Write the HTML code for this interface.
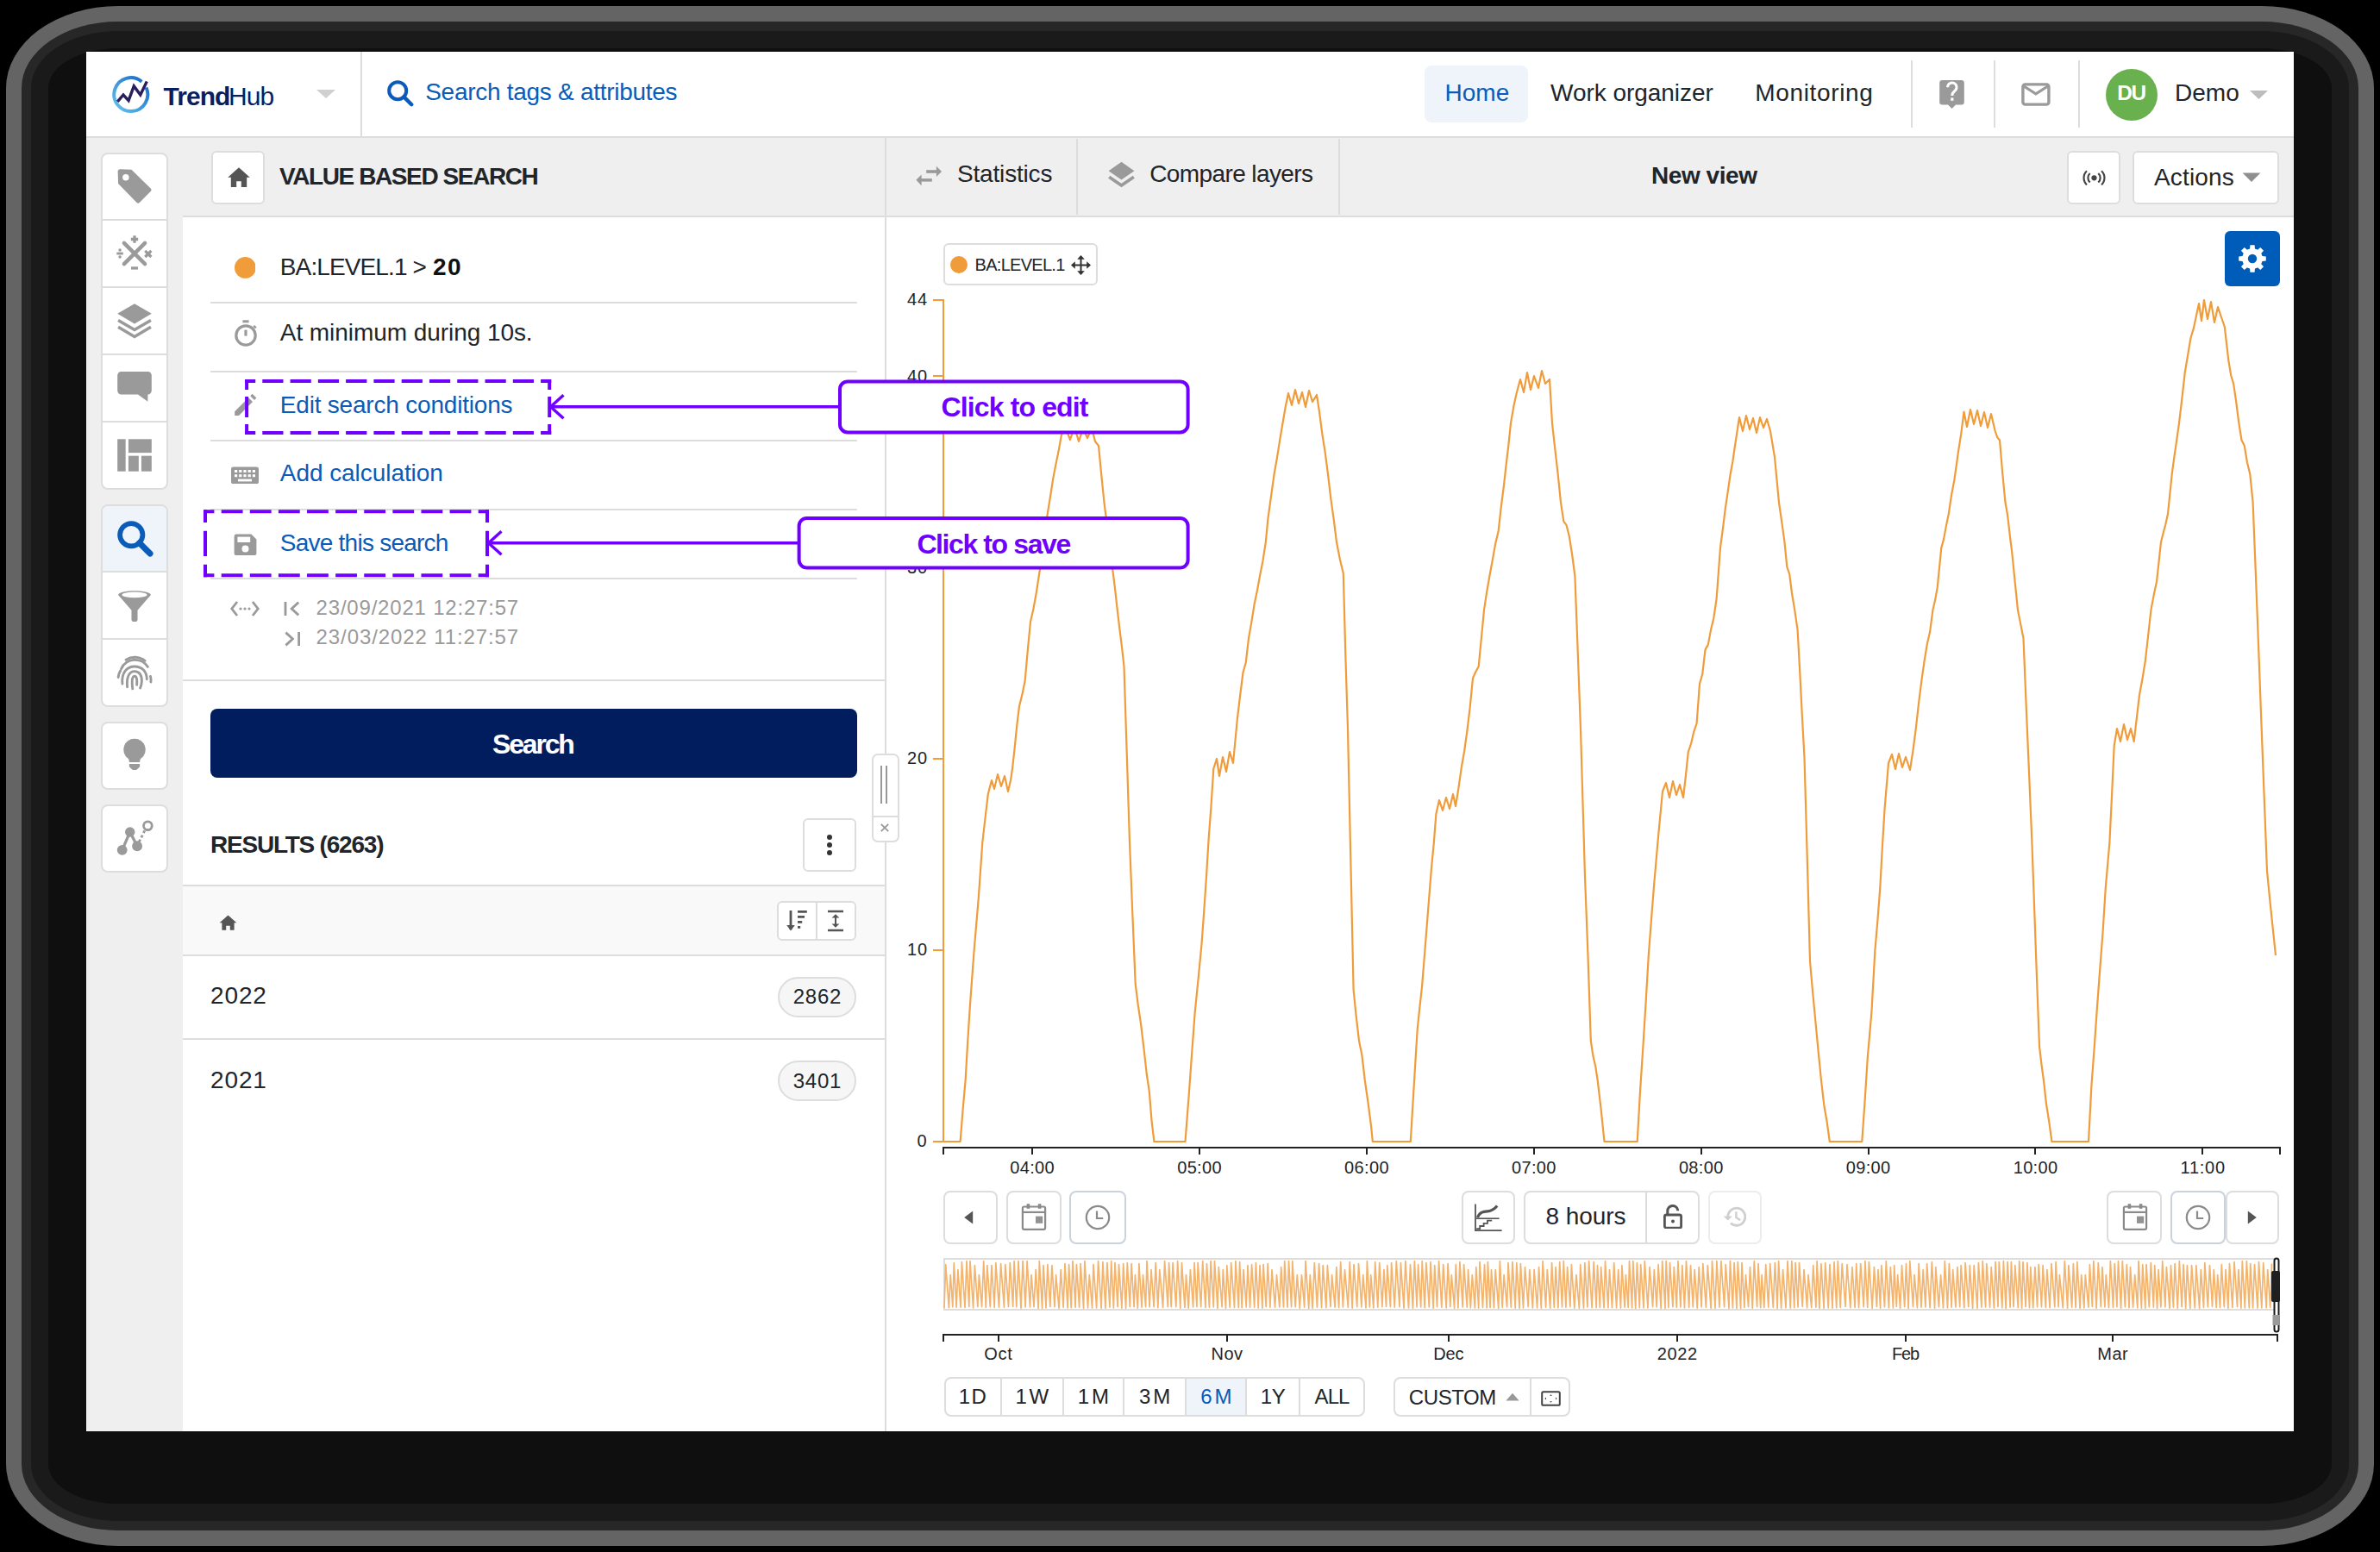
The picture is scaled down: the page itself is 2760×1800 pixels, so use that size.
<!DOCTYPE html>
<html><head><meta charset="utf-8"><title>TrendHub</title>
<style>
html,body{margin:0;padding:0}
body{width:2760px;height:1800px;background:#000;overflow:hidden;position:relative;font-family:"Liberation Sans",sans-serif}
.t{position:absolute;white-space:nowrap;font-family:"Liberation Sans",sans-serif}
.r{position:absolute;display:block}
.halo1{position:absolute;left:7px;top:7px;width:2746px;height:1786px;border-radius:130px/95px;background:#646464}
.halo2{position:absolute;left:25px;top:25px;width:2710px;height:1750px;border-radius:112px/77px;background:#272727}
.halo3{position:absolute;left:36px;top:36px;width:2688px;height:1728px;border-radius:101px/66px;background:#1a1a1a}
.halo4{position:absolute;left:56px;top:56px;width:2648px;height:1688px;border-radius:81px/46px;background:#0f0f0f}
.app{position:absolute;left:100px;top:60px;width:2560px;height:1600px;overflow:hidden;background:#fff}
.z{position:absolute;left:0;top:0;width:1280px;height:800px;zoom:2}
</style></head><body>
<div class="halo1"></div><div class="halo2"></div><div class="halo3"></div><div class="halo4"></div>
<div class="app"><div class="z">
<div class="r" style="left:0px;top:0px;width:1280px;height:49px;background:#fff"></div>
<div class="r" style="left:0px;top:49px;width:1280px;height:1px;background:#dddddd"></div>
<svg class="r" style="left:14px;top:13px;" width="24" height="24" viewBox="0 0 24 24"><defs><linearGradient id="lg" x1="0" y1="1" x2="1" y2="0"><stop offset="0" stop-color="#62c6ef"/><stop offset="1" stop-color="#1466c6"/></linearGradient></defs><path d="M20.76 7.74 A9.75 9.75 0 1 1 18.17 4.33" fill="none" stroke="url(#lg)" stroke-width="2"/><polyline points="4.15,15.95 7.5,12 10.55,15.3 13.65,6.95 17.4,12 21.15,4.3" fill="none" stroke="#2a1f5e" stroke-width="1.7" stroke-linejoin="miter"/></svg>
<div class="t" style="left:44.7px;top:18.25px;font-size:15px;line-height:15px;letter-spacing:-0.46px;color:#0b1f5e;font-weight:700;">Trend</div>
<div class="t" style="left:82.5px;top:18.25px;font-size:15px;line-height:15px;letter-spacing:-0.46px;color:#0b1f5e;">Hub</div>
<svg class="r" style="left:133px;top:21.5px;" width="12" height="6" viewBox="0 0 12 6"><path d="M0.5 0.5 L11.5 0.5 L6 5.5 Z" fill="#d0d0d0"/></svg>
<div class="r" style="left:159px;top:0px;width:1px;height:49px;background:#dddddd"></div>
<svg class="r" style="left:174px;top:16px;" width="16" height="16" viewBox="0 0 16 16"><circle cx="6.6" cy="6.6" r="5" fill="none" stroke="#0a5cb8" stroke-width="2"/><path d="M10.2 10.2 L14.6 14.6" stroke="#0a5cb8" stroke-width="2.2" stroke-linecap="round"/></svg>
<div class="t" style="left:196.6px;top:16.59px;font-size:14px;line-height:14px;letter-spacing:-0.14px;color:#0a5cb8;">Search tags &amp; attributes</div>
<div class="r" style="left:776px;top:8px;width:60px;height:33px;background:#eef4fa;border-radius:4px"></div>
<div class="t" style="left:787.8px;top:17.14px;font-size:14px;line-height:14px;letter-spacing:-0.01px;color:#0a5cb8;">Home</div>
<div class="t" style="left:849px;top:17.14px;font-size:14px;line-height:14px;letter-spacing:-0.02px;color:#212529;">Work organizer</div>
<div class="t" style="left:967.6px;top:17.14px;font-size:14px;line-height:14px;letter-spacing:0.33px;color:#212529;">Monitoring</div>
<div class="r" style="left:1058px;top:5px;width:1px;height:39px;background:#dddddd"></div>
<div class="r" style="left:1106px;top:5px;width:1px;height:39px;background:#dddddd"></div>
<div class="r" style="left:1155.1px;top:5px;width:1px;height:39px;background:#dddddd"></div>
<svg class="r" style="left:1074px;top:16px;" width="17" height="19" viewBox="0 0 17 19"><path d="M2.2 0.5 H13.3 A1.6 1.6 0 0 1 14.9 2.1 V13.1 A1.6 1.6 0 0 1 13.3 14.7 H10 L7.75 17 L5.5 14.7 H2.2 A1.6 1.6 0 0 1 0.6 13.1 V2.1 A1.6 1.6 0 0 1 2.2 0.5 Z" fill="#9a9a9a"/><path d="M5.3 4.6 A2.6 2.6 0 1 1 9.4 6.7 C8.3 7.5 7.9 8.1 7.9 9.5" fill="none" stroke="#fff" stroke-width="1.5"/><rect x="7.1" y="10.7" width="1.6" height="1.7" fill="#fff"/></svg>
<svg class="r" style="left:1122px;top:18px;" width="18" height="14" viewBox="0 0 18 14"><rect x="0.95" y="0.95" width="15" height="11.6" rx="1.3" fill="none" stroke="#9a9a9a" stroke-width="1.7"/><path d="M1.5 2 L8.45 6.4 L15.4 2" fill="none" stroke="#9a9a9a" stroke-width="1.6"/></svg>
<svg class="r" style="left:1171px;top:10px;" width="30" height="30" viewBox="0 0 30 30"><circle cx="15" cy="15" r="15" fill="#69b04f"/></svg>
<div class="t" style="left:1177.65px;top:18.08px;font-size:12.2px;line-height:12.2px;letter-spacing:-0.73px;color:#fff;font-weight:700;">DU</div>
<div class="t" style="left:1211px;top:17.14px;font-size:14px;line-height:14px;letter-spacing:0.02px;color:#212529;">Demo</div>
<svg class="r" style="left:1254px;top:22px;" width="12" height="6" viewBox="0 0 12 6"><path d="M0.5 0.5 L11 0.5 L5.75 5.5 Z" fill="#bdbdbd"/></svg>
<div class="r" style="left:0px;top:50px;width:1280px;height:45.5px;background:#efefef"></div>
<div class="r" style="left:0px;top:95.5px;width:56px;height:704.5px;background:#efefef"></div>
<div class="r" style="left:56px;top:95px;width:1224px;height:1px;background:#dddddd"></div>
<div class="r" style="left:463px;top:50px;width:1px;height:750px;background:#dddddd"></div>
<div class="r" style="left:72.5px;top:57.5px;width:31px;height:31px;background:#fff;border:1px solid #dddddd;border-radius:3px;box-sizing:border-box"></div>
<svg class="r" style="left:81.5px;top:66.5px;" width="14" height="13" viewBox="0 0 14 13"><path d="M0.6 6.4 L7 0.6 L13.4 6.4 L11.6 6.4 L11.6 12 L8.4 12 L8.4 8.6 L5.6 8.6 L5.6 12 L2.4 12 L2.4 6.4 Z" fill="#555"/></svg>
<div class="t" style="left:112px;top:65.34px;font-size:14px;line-height:14px;letter-spacing:-0.7px;color:#212529;font-weight:700;">VALUE BASED SEARCH</div>
<div class="r" style="left:574px;top:50.5px;width:1px;height:44px;background:#dddddd"></div>
<div class="r" style="left:726px;top:50.5px;width:1px;height:44px;background:#dddddd"></div>
<svg class="r" style="left:480.5px;top:65.5px;" width="16" height="13" viewBox="0 0 32 26"><rect x="13.2" y="6.2" width="12" height="3.6" fill="#9a9a9a"/><path d="M24.9 1.7 L31 7.95 L24.9 14.1 Z" fill="#9a9a9a"/><rect x="7" y="16.1" width="12.8" height="3.5" fill="#9a9a9a"/><path d="M7.6 11.5 L1.4 17.8 L7.6 24.2 Z" fill="#9a9a9a"/></svg>
<div class="t" style="left:505px;top:63.84px;font-size:14px;line-height:14px;letter-spacing:-0.09px;color:#212529;">Statistics</div>
<svg class="r" style="left:592.5px;top:63.5px;" width="15.5" height="16" viewBox="0 0 15.5 16"><path d="M7.75 0.4 L15.2 5.6 L7.75 10.8 L0.3 5.6 Z" fill="#9a9a9a"/><path d="M0.6 9.1 L7.75 14 L14.9 9.1" fill="none" stroke="#9a9a9a" stroke-width="1.8"/></svg>
<div class="t" style="left:616.6px;top:63.84px;font-size:14px;line-height:14px;letter-spacing:-0.3px;color:#212529;">Compare layers</div>
<div class="t" style="left:907.5px;top:64.84px;font-size:14px;line-height:14px;letter-spacing:-0.22px;color:#212529;font-weight:700;">New view</div>
<div class="r" style="left:1148.5px;top:57.5px;width:31px;height:31px;background:#fff;border:1px solid #dddddd;border-radius:3px;box-sizing:border-box"></div>
<svg class="r" style="left:1157.5px;top:68.3px;" width="13.5" height="9.3" viewBox="0 0 17 12"><circle cx="8.5" cy="6" r="2" fill="#444"/><path d="M5.4 2.6 A4.6 4.6 0 0 0 5.4 9.4 M11.6 2.6 A4.6 4.6 0 0 1 11.6 9.4 M3 0.8 A7.2 7.2 0 0 0 3 11.2 M14 0.8 A7.2 7.2 0 0 1 14 11.2" fill="none" stroke="#444" stroke-width="1.4"/></svg>
<div class="r" style="left:1186.5px;top:57.5px;width:85px;height:31px;background:#fff;border:1px solid #dddddd;border-radius:3px;box-sizing:border-box"></div>
<div class="t" style="left:1199px;top:66.14px;font-size:14px;line-height:14px;letter-spacing:0.08px;color:#212529;">Actions</div>
<svg class="r" style="left:1250px;top:70px;" width="11" height="6" viewBox="0 0 11 6"><path d="M0.3 0.3 L10.7 0.3 L5.5 5.5 Z" fill="#8f8f8f"/></svg>
<div class="r" style="left:8.5px;top:58.5px;width:39px;height:195.5px;background:#fff;border:1px solid #dddddd;border-radius:4px;box-sizing:border-box;overflow:hidden"></div>
<div class="r" style="left:9px;top:97px;width:38px;height:1px;background:#dddddd"></div>
<div class="r" style="left:9px;top:136px;width:38px;height:1px;background:#dddddd"></div>
<div class="r" style="left:9px;top:175px;width:38px;height:1px;background:#dddddd"></div>
<div class="r" style="left:9px;top:214px;width:38px;height:1px;background:#dddddd"></div>
<div class="r" style="left:8.5px;top:262.5px;width:39px;height:117.5px;background:#fff;border:1px solid #dddddd;border-radius:4px;box-sizing:border-box;overflow:hidden"></div>
<div class="r" style="left:9.5px;top:263.5px;width:37px;height:38px;background:#eef4fa;border-radius:3px 3px 0 0"></div>
<div class="r" style="left:9px;top:301px;width:38px;height:1px;background:#dddddd"></div>
<div class="r" style="left:9px;top:340px;width:38px;height:1px;background:#dddddd"></div>
<div class="r" style="left:8.5px;top:388.5px;width:39px;height:39.5px;background:#fff;border:1px solid #dddddd;border-radius:4px;box-sizing:border-box;overflow:hidden"></div>
<div class="r" style="left:8.5px;top:436.5px;width:39px;height:39.5px;background:#fff;border:1px solid #dddddd;border-radius:4px;box-sizing:border-box;overflow:hidden"></div>
<svg class="r" style="left:17px;top:67px;" width="22" height="22" viewBox="0 0 20 20"><path d="M1.2 2.4 A1.3 1.3 0 0 1 2.5 1 L8.4 1.2 L18.6 11.2 A1 1 0 0 1 18.6 12.6 L12.6 18.6 A1 1 0 0 1 11.2 18.6 L1.4 8.6 Z" fill="#9a9a9a"/><circle cx="5.4" cy="5.3" r="1.7" fill="#fff"/></svg>
<svg class="r" style="left:17px;top:106px;" width="22" height="22" viewBox="0 0 20 20"><path d="M4.5 4.5 L15.5 15.5 M15.5 4.5 L4.5 15.5" stroke="#9a9a9a" stroke-width="2" stroke-linecap="round"/><path d="M10 0.6 V4.4 M8.1 2.5 H11.9" stroke="#9a9a9a" stroke-width="1.5"/><path d="M8.2 17.7 H11.8" stroke="#9a9a9a" stroke-width="1.5"/><path d="M0.6 10 H4" stroke="#9a9a9a" stroke-width="1.3"/><circle cx="2.3" cy="8.2" r="0.8" fill="#9a9a9a"/><circle cx="2.3" cy="11.8" r="0.8" fill="#9a9a9a"/><path d="M15.6 8.6 L18.8 11.8 M18.8 8.6 L15.6 11.8" stroke="#9a9a9a" stroke-width="1.5"/></svg>
<svg class="r" style="left:17px;top:145px;" width="22" height="22" viewBox="0 0 20 20"><path d="M10 1 L19 6.3 L10 11.6 L1 6.3 Z" fill="#9a9a9a"/><path d="M1.4 9.8 L10 14.8 L18.6 9.8" fill="none" stroke="#9a9a9a" stroke-width="1.6"/><path d="M1.4 13.3 L10 18.4 L18.6 13.3" fill="none" stroke="#9a9a9a" stroke-width="1.6"/></svg>
<svg class="r" style="left:17px;top:184px;" width="22" height="22" viewBox="0 0 20 20"><path d="M3 1.4 H17 A2 2 0 0 1 19 3.4 V11.4 A2 2 0 0 1 17 13.4 V17.2 L11.8 13.4 H3 A2 2 0 0 1 1 11.4 V3.4 A2 2 0 0 1 3 1.4 Z" fill="#9a9a9a"/></svg>
<svg class="r" style="left:17px;top:223px;" width="22" height="22" viewBox="0 0 20 20"><rect x="1" y="1.5" width="4.3" height="17" fill="#9a9a9a"/><rect x="6.8" y="1.5" width="12.2" height="7.2" fill="#9a9a9a"/><rect x="6.8" y="10.3" width="5.4" height="8.2" fill="#9a9a9a"/><rect x="13.6" y="10.3" width="5.4" height="8.2" fill="#9a9a9a"/></svg>
<svg class="r" style="left:17px;top:271px;" width="22" height="22" viewBox="0 0 20 20"><circle cx="8.3" cy="8.3" r="6" fill="none" stroke="#0a5cb8" stroke-width="2.6"/><path d="M12.6 12.6 L18.2 18.2" stroke="#0a5cb8" stroke-width="3.2" stroke-linecap="round"/></svg>
<svg class="r" style="left:17px;top:310px;" width="22" height="22" viewBox="0 0 20 20"><path d="M1.4 4.6 C1.4 1.6 18.6 1.6 18.6 4.6 L11.6 12.6 V17.6 A1 1 0 0 1 10.6 18.6 H9.4 A1 1 0 0 1 8.4 17.6 V12.6 Z" fill="#9a9a9a"/><ellipse cx="10" cy="4.5" rx="6.6" ry="1.5" fill="#fff"/></svg>
<svg class="r" style="left:17px;top:349px;" width="22" height="22" viewBox="0 0 20 20"><g fill="none" stroke="#9a9a9a" stroke-width="1.3" stroke-linecap="round"><path d="M3 8 A8 8 0 0 1 17 7"/><path d="M5.5 3.3 A8.5 8.5 0 0 1 15.5 3.8"/><path d="M1.4 12.5 A8.6 8.6 0 0 1 2.6 9"/><path d="M3.6 16 C3 10 6 6.8 10 6.8 C14 6.8 16.5 9.5 16.5 13.5"/><path d="M6.2 17.6 C5.6 12.5 7.2 9.4 10 9.4 C12.6 9.4 14 11.4 13.8 14.8 C13.7 16 13.4 17.2 13 18.2"/><path d="M9 18.6 C8.6 16 8.4 12 10 11.9 C11.5 11.9 11.3 15 11.2 16.5"/><path d="M18.4 12 A8 8 0 0 1 18.6 15"/></g></svg>
<svg class="r" style="left:17px;top:397px;" width="22" height="22" viewBox="0 0 20 20"><path d="M10 1.3 A5.7 5.7 0 0 1 13.6 11.5 C12.9 12.1 12.8 12.8 12.8 13.6 H7.2 C7.2 12.8 7.1 12.1 6.4 11.5 A5.7 5.7 0 0 1 10 1.3 Z" fill="#9a9a9a"/><path d="M7.2 14.6 H12.8 V16 L11 17.7 H9 L7.2 16 Z" fill="#9a9a9a"/></svg>
<svg class="r" style="left:17px;top:445px;" width="22" height="22" viewBox="0 0 20 20"><circle cx="3.5" cy="16.3" r="2.7" fill="#9a9a9a"/><circle cx="7.6" cy="6.8" r="2.6" fill="#9a9a9a"/><circle cx="11.4" cy="14.2" r="2.7" fill="#9a9a9a"/><path d="M3.5 16.3 L7.6 6.8 L11.4 14.2" fill="none" stroke="#9a9a9a" stroke-width="1.5"/><circle cx="17" cy="3.5" r="2.2" fill="none" stroke="#9a9a9a" stroke-width="1.3"/><path d="M12.4 12 L15.6 5.6" stroke="#9a9a9a" stroke-width="1.3" stroke-dasharray="1.4 1.2"/></svg>
<div class="r" style="left:56px;top:96px;width:407px;height:704px;background:#fff"></div>
<div class="r" style="left:72px;top:145px;width:375px;height:1px;background:#dddddd"></div>
<div class="r" style="left:72px;top:185px;width:375px;height:1px;background:#dddddd"></div>
<div class="r" style="left:72px;top:225px;width:375px;height:1px;background:#dddddd"></div>
<div class="r" style="left:72px;top:265px;width:375px;height:1px;background:#dddddd"></div>
<div class="r" style="left:72px;top:305px;width:375px;height:1px;background:#dddddd"></div>
<svg class="r" style="left:85.8px;top:119px;" width="12.4" height="12.4" viewBox="0 0 12.4 12.4"><circle cx="6.2" cy="6.2" r="6.2" fill="#f09c3a"/></svg>
<div class="t" style="left:112.4px;top:118.24px;font-size:14px;line-height:14px;letter-spacing:-0.44px;color:#212529;">BA:LEVEL.1 &gt;</div>
<div class="t" style="left:201.03px;top:118.24px;font-size:14px;line-height:14px;letter-spacing:0.68px;color:#111;font-weight:700;">20</div>
<svg class="r" style="left:85.5px;top:155.3px;" width="14" height="15.5" viewBox="0 0 14 15.5"><circle cx="7" cy="9" r="5.6" fill="none" stroke="#9a9a9a" stroke-width="1.6"/><path d="M5.2 0.9 H8.8" stroke="#9a9a9a" stroke-width="1.5"/><path d="M7 5.8 V9.3" stroke="#9a9a9a" stroke-width="1.6"/><path d="M11.6 3.4 L12.9 4.7" stroke="#9a9a9a" stroke-width="1.3"/></svg>
<div class="t" style="left:112.4px;top:156.04px;font-size:14px;line-height:14px;letter-spacing:-0.03px;color:#212529;">At minimum during 10s.</div>
<svg class="r" style="left:85.5px;top:198px;" width="13.5" height="13.5" viewBox="0 0 13.5 13.5"><path d="M0.6 13 V10.6 L8.6 2.6 L11 5 L3 13 Z" fill="#9a9a9a"/><path d="M9.6 1.6 L10.8 0.4 L13.2 2.8 L12 4 Z" fill="#9a9a9a"/></svg>
<div class="t" style="left:112.4px;top:197.84px;font-size:14px;line-height:14px;letter-spacing:-0.1px;color:#0a5cb8;">Edit search conditions</div>
<svg class="r" style="left:84px;top:240.5px;" width="16" height="10.2" viewBox="0 0 16 10.2"><rect x="0" y="0.2" width="16" height="10" rx="1.3" fill="#9a9a9a"/><g fill="#fff"><rect x="2" y="2" width="1.6" height="1.5"/><rect x="4.6" y="2" width="1.6" height="1.5"/><rect x="7.2" y="2" width="1.6" height="1.5"/><rect x="9.8" y="2" width="1.6" height="1.5"/><rect x="12.4" y="2" width="1.6" height="1.5"/><rect x="2" y="4.6" width="1.6" height="1.5"/><rect x="4.6" y="4.6" width="1.6" height="1.5"/><rect x="7.2" y="4.6" width="1.6" height="1.5"/><rect x="9.8" y="4.6" width="1.6" height="1.5"/><rect x="12.4" y="4.6" width="1.6" height="1.5"/><rect x="4" y="7.3" width="8" height="1.4"/></g></svg>
<div class="t" style="left:112.4px;top:237.64px;font-size:14px;line-height:14px;letter-spacing:-0.03px;color:#0a5cb8;">Add calculation</div>
<svg class="r" style="left:85.5px;top:279.3px;" width="13.5" height="12.8" viewBox="0 0 13.5 12.8"><path d="M1.4 0.3 H10.2 L13.2 3.3 V11.2 A1.3 1.3 0 0 1 11.9 12.5 H1.6 A1.3 1.3 0 0 1 0.3 11.2 V1.6 A1.3 1.3 0 0 1 1.4 0.3 Z" fill="#9a9a9a"/><rect x="2.2" y="1.8" width="7.4" height="3.2" fill="#fff"/><circle cx="6.75" cy="8.8" r="2" fill="#fff"/></svg>
<div class="t" style="left:112.4px;top:278.04px;font-size:14px;line-height:14px;letter-spacing:-0.38px;color:#0a5cb8;">Save this search</div>
<svg class="r" style="left:83.5px;top:318px;" width="17" height="10" viewBox="0 0 17 10"><path d="M4 1 L0.9 5 L4 9 M13 1 L16.1 5 L13 9" fill="none" stroke="#9a9a9a" stroke-width="1.4"/><g fill="#9a9a9a"><circle cx="6" cy="5" r="0.8"/><circle cx="8.5" cy="5" r="0.8"/><circle cx="11" cy="5" r="0.8"/></g></svg>
<svg class="r" style="left:114.5px;top:318.5px;" width="10" height="9" viewBox="0 0 10 9"><path d="M1 0.5 V8.5" stroke="#9a9a9a" stroke-width="1.4"/><path d="M8.6 0.8 L4.6 4.5 L8.6 8.2" fill="none" stroke="#9a9a9a" stroke-width="1.4"/></svg>
<div class="t" style="left:133.3px;top:316.64px;font-size:12px;line-height:12px;letter-spacing:0.4px;color:#9a9a9a;">23/09/2021 12:27:57</div>
<svg class="r" style="left:114.5px;top:336px;" width="10" height="9" viewBox="0 0 10 9"><path d="M8.8 0.5 V8.5" stroke="#9a9a9a" stroke-width="1.4"/><path d="M1.2 0.8 L5.2 4.5 L1.2 8.2" fill="none" stroke="#9a9a9a" stroke-width="1.4"/></svg>
<div class="t" style="left:133.3px;top:333.74px;font-size:12px;line-height:12px;letter-spacing:0.45px;color:#9a9a9a;">23/03/2022 11:27:57</div>
<div class="r" style="left:56px;top:364px;width:407px;height:1px;background:#dddddd"></div>
<div class="r" style="left:72px;top:381px;width:375px;height:40px;background:#021d5e;border-radius:4px"></div>
<div class="t" style="left:235.55px;top:393.55px;font-size:16px;line-height:16px;letter-spacing:-1.1px;color:#fff;font-weight:700;">Search</div>
<div class="t" style="left:72px;top:453.04px;font-size:14px;line-height:14px;letter-spacing:-0.61px;color:#212529;font-weight:700;">RESULTS (6263)</div>
<div class="r" style="left:415.5px;top:444.5px;width:31px;height:31px;background:#fff;border:1px solid #dddddd;border-radius:3px;box-sizing:border-box"></div>
<svg class="r" style="left:429px;top:453px;" width="4" height="14" viewBox="0 0 4 14"><circle cx="2" cy="2.5" r="1.5" fill="#333"/><circle cx="2" cy="7" r="1.5" fill="#333"/><circle cx="2" cy="11.5" r="1.5" fill="#333"/></svg>
<div class="r" style="left:56px;top:483px;width:407px;height:41.5px;background:#f9f9f9;border-top:1px solid #dddddd;border-bottom:1px solid #dddddd;box-sizing:border-box"></div>
<svg class="r" style="left:76.8px;top:500.4px;" width="10.5" height="9.2" viewBox="0 0 10.5 9.2"><path d="M0.3 4.6 L5.25 0.3 L10.2 4.6 H8.8 V8.9 H6.4 V6.4 H4.1 V8.9 H1.7 V4.6 Z" fill="#555"/></svg>
<div class="r" style="left:400.5px;top:492.5px;width:46px;height:23px;background:#fff;border:1px solid #dddddd;border-radius:3px;box-sizing:border-box"></div>
<div class="r" style="left:423px;top:493.5px;width:1px;height:21px;background:#dddddd"></div>
<svg class="r" style="left:405.5px;top:497.5px;" width="13" height="13" viewBox="0 0 13 13"><path d="M3 0.5 V11.5" stroke="#555" stroke-width="1.4"/><path d="M0.6 9 L3 12.2 L5.4 9 Z" fill="#555"/><path d="M7 1.2 H12.4 M7 4.2 H11 M7 7.2 H9.6 M7 10.2 H8.6" stroke="#555" stroke-width="1.3"/></svg>
<svg class="r" style="left:428.5px;top:497.5px;" width="12" height="13" viewBox="0 0 12 13"><path d="M1.5 1 H10.5 M1.5 12 H10.5" stroke="#555" stroke-width="1.2"/><path d="M6 3 V10" stroke="#555" stroke-width="1"/><path d="M3.8 4.8 L6 2.6 L8.2 4.8 Z M3.8 8.2 L6 10.4 L8.2 8.2 Z" fill="#555"/></svg>
<div class="t" style="left:72px;top:540.44px;font-size:14px;line-height:14px;letter-spacing:0.44px;color:#212529;">2022</div>
<div class="r" style="left:401px;top:536.3px;width:45.5px;height:23.5px;background:#f6f6f6;border:1px solid #dddddd;border-radius:12px;box-sizing:border-box"></div>
<div class="t" style="left:409.88px;top:542.04px;font-size:12px;line-height:12px;letter-spacing:0.38px;color:#212529;">2862</div>
<div class="r" style="left:56px;top:572px;width:407px;height:1px;background:#dddddd"></div>
<div class="t" style="left:72px;top:589.64px;font-size:14px;line-height:14px;letter-spacing:0.44px;color:#212529;">2021</div>
<div class="r" style="left:401px;top:585px;width:45.5px;height:23.5px;background:#f6f6f6;border:1px solid #dddddd;border-radius:12px;box-sizing:border-box"></div>
<div class="t" style="left:409.88px;top:591.04px;font-size:12px;line-height:12px;letter-spacing:0.38px;color:#212529;">3401</div>
<div class="r" style="left:464px;top:96px;width:816px;height:704px;background:#fff"></div>
<div class="r" style="left:1240px;top:104px;width:32px;height:32px;background:#005cb9;border-radius:3px"></div>
<svg class="r" style="left:1248px;top:112px;" width="16" height="16" viewBox="0 0 16 16"><path d="M13.72 6.55 L15.89 6.69 L15.89 9.31 L13.72 9.45 L13.07 11.02 L14.51 12.65 L12.65 14.51 L11.02 13.07 L9.45 13.72 L9.31 15.89 L6.69 15.89 L6.55 13.72 L4.98 13.07 L3.35 14.51 L1.49 12.65 L2.93 11.02 L2.28 9.45 L0.11 9.31 L0.11 6.69 L2.28 6.55 L2.93 4.98 L1.49 3.35 L3.35 1.49 L4.98 2.93 L6.55 2.28 L6.69 0.11 L9.31 0.11 L9.45 2.28 L11.02 2.93 L12.65 1.49 L14.51 3.35 L13.07 4.98 Z" fill="#fff"/><circle cx="8" cy="8" r="5.8" fill="#fff"/><circle cx="8" cy="8" r="2.6" fill="#005cb9"/></svg>
<div class="r" style="left:497px;top:111px;width:89.5px;height:24.5px;background:#fff;border:1px solid #dddddd;border-radius:3px;box-sizing:border-box"></div>
<svg class="r" style="left:501px;top:118.4px;" width="10" height="10" viewBox="0 0 10 10"><circle cx="5" cy="5" r="5" fill="#f09c3a"/></svg>
<div class="t" style="left:515.3px;top:118.68px;font-size:10px;line-height:10px;letter-spacing:-0.36px;color:#212529;">BA:LEVEL.1</div>
<svg class="r" style="left:571px;top:118px;" width="11.5" height="11.5" viewBox="0 0 11.5 11.5"><path d="M5.75 0.8 V10.7 M0.8 5.75 H10.7" stroke="#333" stroke-width="1"/><path d="M5.75 0 L3.6 2.4 H7.9 Z M5.75 11.5 L3.6 9.1 H7.9 Z M0 5.75 L2.4 3.6 V7.9 Z M11.5 5.75 L9.1 3.6 V7.9 Z" fill="#333"/></svg>
<div class="r" style="left:496.5px;top:143.3px;width:1px;height:489px;background:#f09c3a"></div>
<div class="r" style="left:491px;top:631.3px;width:6px;height:1px;background:#f09c3a"></div>
<div class="t" style="left:481.8px;top:626.53px;font-size:10px;line-height:10px;letter-spacing:0.25px;color:#212529;">0</div>
<div class="r" style="left:491px;top:520.39px;width:6px;height:1px;background:#f09c3a"></div>
<div class="t" style="left:476px;top:515.62px;font-size:10px;line-height:10px;letter-spacing:0.47px;color:#212529;">10</div>
<div class="r" style="left:491px;top:409.48px;width:6px;height:1px;background:#f09c3a"></div>
<div class="t" style="left:476px;top:404.71px;font-size:10px;line-height:10px;letter-spacing:0.47px;color:#212529;">20</div>
<div class="r" style="left:491px;top:298.57px;width:6px;height:1px;background:#f09c3a"></div>
<div class="t" style="left:476px;top:293.8px;font-size:10px;line-height:10px;letter-spacing:0.47px;color:#212529;">30</div>
<div class="r" style="left:491px;top:187.66px;width:6px;height:1px;background:#f09c3a"></div>
<div class="t" style="left:476px;top:182.89px;font-size:10px;line-height:10px;letter-spacing:0.47px;color:#212529;">40</div>
<div class="r" style="left:491px;top:143.3px;width:6px;height:1px;background:#f09c3a"></div>
<div class="t" style="left:476px;top:138.53px;font-size:10px;line-height:10px;letter-spacing:0.47px;color:#212529;">44</div>
<div class="r" style="left:497px;top:635.2px;width:775.5px;height:1px;background:#222"></div>
<div class="r" style="left:496.5px;top:635.2px;width:1px;height:4.5px;background:#222"></div>
<div class="r" style="left:1271.5px;top:635.2px;width:1px;height:4.5px;background:#222"></div>
<div class="r" style="left:548px;top:635.2px;width:1px;height:4.5px;background:#222"></div>
<div class="t" style="left:535.65px;top:641.83px;font-size:10px;line-height:10px;letter-spacing:0.17px;color:#212529;">04:00</div>
<div class="r" style="left:644.95px;top:635.2px;width:1px;height:4.5px;background:#222"></div>
<div class="t" style="left:632.6px;top:641.83px;font-size:10px;line-height:10px;letter-spacing:0.17px;color:#212529;">05:00</div>
<div class="r" style="left:741.9px;top:635.2px;width:1px;height:4.5px;background:#222"></div>
<div class="t" style="left:729.55px;top:641.83px;font-size:10px;line-height:10px;letter-spacing:0.17px;color:#212529;">06:00</div>
<div class="r" style="left:838.85px;top:635.2px;width:1px;height:4.5px;background:#222"></div>
<div class="t" style="left:826.5px;top:641.83px;font-size:10px;line-height:10px;letter-spacing:0.17px;color:#212529;">07:00</div>
<div class="r" style="left:935.8px;top:635.2px;width:1px;height:4.5px;background:#222"></div>
<div class="t" style="left:923.45px;top:641.83px;font-size:10px;line-height:10px;letter-spacing:0.17px;color:#212529;">08:00</div>
<div class="r" style="left:1032.75px;top:635.2px;width:1px;height:4.5px;background:#222"></div>
<div class="t" style="left:1020.4px;top:641.83px;font-size:10px;line-height:10px;letter-spacing:0.17px;color:#212529;">09:00</div>
<div class="r" style="left:1129.7px;top:635.2px;width:1px;height:4.5px;background:#222"></div>
<div class="t" style="left:1117.35px;top:641.83px;font-size:10px;line-height:10px;letter-spacing:0.17px;color:#212529;">10:00</div>
<div class="r" style="left:1226.65px;top:635.2px;width:1px;height:4.5px;background:#222"></div>
<div class="t" style="left:1214.3px;top:641.83px;font-size:10px;line-height:10px;letter-spacing:0.36px;color:#212529;">11:00</div>
<div class="r" style="left:497.2px;top:660.3px;width:31.5px;height:31.3px;background:#fff;border:1px solid #dddddd;border-radius:4px;box-sizing:border-box;"></div>
<div class="r" style="left:533.3px;top:660.3px;width:32.2px;height:31.3px;background:#fff;border:1px solid #dddddd;border-radius:4px;box-sizing:border-box;"></div>
<div class="r" style="left:570px;top:660.3px;width:32.8px;height:31.3px;background:#fff;border:1px solid #dddddd;border-radius:4px;box-sizing:border-box;border-color:#c9d3dd"></div>
<svg class="r" style="left:508.5px;top:672px;" width="6" height="8" viewBox="0 0 6 8"><path d="M5.6 0.3 V7.7 L0.6 4 Z" fill="#555"/></svg>
<svg class="r" style="left:541.8px;top:667.8px;" width="15" height="15.5" viewBox="0 0 15 15.5"><rect x="0.95" y="1.75" width="13.1" height="13.2" rx="0.9" fill="none" stroke="#8a8a8a" stroke-width="1.1"/><path d="M1 4.95 H14" stroke="#8a8a8a" stroke-width="1.1"/><rect x="3.3" y="0.1" width="1.8" height="2.8" fill="#8a8a8a"/><rect x="9.9" y="0.1" width="1.8" height="2.8" fill="#8a8a8a"/><rect x="8.5" y="7.3" width="4.1" height="4.1" fill="#929292"/></svg>
<svg class="r" style="left:578.8px;top:668.5px;" width="15" height="15" viewBox="0 0 15 15"><circle cx="7.5" cy="7.5" r="6.6" fill="none" stroke="#8a8a8a" stroke-width="1.1"/><path d="M7 3.8 V8 H10.6" fill="none" stroke="#8a8a8a" stroke-width="1.1"/></svg>
<div class="r" style="left:797.3px;top:660.3px;width:31.2px;height:31.3px;background:#fff;border:1px solid #dddddd;border-radius:4px;box-sizing:border-box;"></div>
<svg class="r" style="left:804.5px;top:668px;" width="16.5" height="16.5" viewBox="0 0 16.5 16.5"><path d="M1 0.3 V15.6 H16.3" fill="none" stroke="#555" stroke-width="0.9"/><path d="M1.5 8.6 H14.8" stroke="#555" stroke-width="0.8"/><path d="M2.2 8 C3.6 4.6 6 4.6 8.2 4.4 C10.4 4.2 11.8 3.4 13.6 1.2" fill="none" stroke="#555" stroke-width="1.6"/><path d="M1.6 14.6 H3.6 V13 H5.8 V11.4 H8 V9.8 H10.6" fill="none" stroke="#555" stroke-width="0.9"/></svg>
<div class="r" style="left:833.3px;top:660.3px;width:102.4px;height:31.3px;background:#fff;border:1px solid #dddddd;border-radius:4px;box-sizing:border-box;"></div>
<div class="r" style="left:904px;top:661.3px;width:1px;height:29.3px;background:#dddddd"></div>
<div class="t" style="left:846.3px;top:668.64px;font-size:14px;line-height:14px;letter-spacing:-0.05px;color:#212529;">8 hours</div>
<svg class="r" style="left:914.5px;top:668.4px;" width="11" height="14.2" viewBox="0 0 11 14.2"><path d="M2.4 6 V3.8 A3 3 0 0 1 8.4 3.6" fill="none" stroke="#555" stroke-width="1.5"/><rect x="0.7" y="6" width="9.6" height="7.6" rx="1" fill="none" stroke="#555" stroke-width="1.4"/><circle cx="5.5" cy="9.8" r="1" fill="#555"/></svg>
<div class="r" style="left:940.4px;top:660.3px;width:31.1px;height:31.3px;background:#fff;border:1px solid #dddddd;border-radius:4px;box-sizing:border-box;border-color:#ececec"></div>
<svg class="r" style="left:948.4px;top:669px;" width="14" height="13" viewBox="0 0 14 13"><path d="M3.4 7 A5 5 0 1 1 5 10.3" fill="none" stroke="#cfcfcf" stroke-width="1.4"/><path d="M0.8 6.2 L3.4 8.8 L5.9 6.2 Z" fill="#cfcfcf"/><path d="M8.2 3.6 V7 L10.6 8.6" fill="none" stroke="#cfcfcf" stroke-width="1.2"/></svg>
<div class="r" style="left:1171.5px;top:660.3px;width:32px;height:31.3px;background:#fff;border:1px solid #dddddd;border-radius:4px;box-sizing:border-box;"></div>
<svg class="r" style="left:1180.3px;top:667.8px;" width="15" height="15.5" viewBox="0 0 15 15.5"><rect x="0.95" y="1.75" width="13.1" height="13.2" rx="0.9" fill="none" stroke="#8a8a8a" stroke-width="1.1"/><path d="M1 4.95 H14" stroke="#8a8a8a" stroke-width="1.1"/><rect x="3.3" y="0.1" width="1.8" height="2.8" fill="#8a8a8a"/><rect x="9.9" y="0.1" width="1.8" height="2.8" fill="#8a8a8a"/><rect x="8.5" y="7.3" width="4.1" height="4.1" fill="#929292"/></svg>
<div class="r" style="left:1208.3px;top:660.3px;width:32px;height:31.3px;background:#fff;border:1px solid #dddddd;border-radius:4px;box-sizing:border-box;border-color:#c9d3dd"></div>
<svg class="r" style="left:1216.8px;top:668.5px;" width="15" height="15" viewBox="0 0 15 15"><circle cx="7.5" cy="7.5" r="6.6" fill="none" stroke="#8a8a8a" stroke-width="1.1"/><path d="M7 3.8 V8 H10.6" fill="none" stroke="#8a8a8a" stroke-width="1.1"/></svg>
<div class="r" style="left:1240.5px;top:660.3px;width:31.1px;height:31.3px;background:#fff;border:1px solid #dddddd;border-radius:4px;box-sizing:border-box;"></div>
<svg class="r" style="left:1253px;top:672px;" width="6" height="8" viewBox="0 0 6 8"><path d="M0.4 0.3 V7.7 L5.4 4 Z" fill="#555"/></svg>
<div class="r" style="left:497px;top:699.7px;width:774px;height:30.5px;border:1px solid #dddddd;box-sizing:border-box;background:#fff"></div>
<div class="r" style="left:496.5px;top:743.6px;width:774.5px;height:1px;background:#222"></div>
<div class="r" style="left:496.5px;top:743.6px;width:1px;height:4.3px;background:#222"></div>
<div class="r" style="left:1270.2px;top:743.6px;width:1px;height:4.3px;background:#222"></div>
<div class="r" style="left:528.3px;top:743.6px;width:1px;height:4.3px;background:#222"></div>
<div class="t" style="left:520.65px;top:750.03px;font-size:10px;line-height:10px;letter-spacing:0.38px;color:#212529;">Oct</div>
<div class="r" style="left:660.9px;top:743.6px;width:1px;height:4.3px;background:#222"></div>
<div class="t" style="left:652.31px;top:750.03px;font-size:10px;line-height:10px;letter-spacing:0.2px;color:#212529;">Nov</div>
<div class="r" style="left:789.4px;top:743.6px;width:1px;height:4.3px;background:#222"></div>
<div class="t" style="left:781.1px;top:750.03px;font-size:10px;line-height:10px;letter-spacing:-0.09px;color:#212529;">Dec</div>
<div class="r" style="left:922px;top:743.6px;width:1px;height:4.3px;background:#222"></div>
<div class="t" style="left:910.9px;top:750.03px;font-size:10px;line-height:10px;letter-spacing:0.32px;color:#212529;">2022</div>
<div class="r" style="left:1054.5px;top:743.6px;width:1px;height:4.3px;background:#222"></div>
<div class="t" style="left:1046.95px;top:750.03px;font-size:10px;line-height:10px;letter-spacing:-0.56px;color:#212529;">Feb</div>
<div class="r" style="left:1174.5px;top:743.6px;width:1px;height:4.3px;background:#222"></div>
<div class="t" style="left:1166.12px;top:750.03px;font-size:10px;line-height:10px;letter-spacing:0.26px;color:#212529;">Mar</div>
<div class="r" style="left:497.5px;top:768.5px;width:244px;height:23px;background:#fff;border:1px solid #dddddd;border-radius:4px;box-sizing:border-box"></div>
<div class="r" style="left:637.6px;top:769.5px;width:35px;height:21px;background:#eef4fa"></div>
<div class="r" style="left:529.9px;top:769.5px;width:1px;height:21px;background:#dddddd"></div>
<div class="r" style="left:565.9px;top:769.5px;width:1px;height:21px;background:#dddddd"></div>
<div class="r" style="left:601px;top:769.5px;width:1px;height:21px;background:#dddddd"></div>
<div class="r" style="left:637.1px;top:769.5px;width:1px;height:21px;background:#dddddd"></div>
<div class="r" style="left:672.2px;top:769.5px;width:1px;height:21px;background:#dddddd"></div>
<div class="r" style="left:703px;top:769.5px;width:1px;height:21px;background:#dddddd"></div>
<div class="t" style="left:505.91px;top:774.24px;font-size:12px;line-height:12px;letter-spacing:0.72px;color:#212529;">1D</div>
<div class="t" style="left:538.71px;top:774.24px;font-size:12px;line-height:12px;letter-spacing:1.38px;color:#212529;">1W</div>
<div class="t" style="left:574.9px;top:774.24px;font-size:12px;line-height:12px;letter-spacing:1.43px;color:#212529;">1M</div>
<div class="t" style="left:610.5px;top:774.24px;font-size:12px;line-height:12px;letter-spacing:1.43px;color:#212529;">3M</div>
<div class="t" style="left:646.1px;top:774.24px;font-size:12px;line-height:12px;letter-spacing:1.43px;color:#0a5cb8;">6M</div>
<div class="t" style="left:680.88px;top:774.24px;font-size:12px;line-height:12px;letter-spacing:-0.23px;color:#212529;">1Y</div>
<div class="t" style="left:712.27px;top:774.24px;font-size:12px;line-height:12px;letter-spacing:-0.45px;color:#212529;">ALL</div>
<div class="r" style="left:758.2px;top:768.5px;width:102.4px;height:23px;background:#fff;border:1px solid #dddddd;border-radius:4px;box-sizing:border-box"></div>
<div class="r" style="left:837px;top:769.5px;width:1px;height:21px;background:#dddddd"></div>
<div class="t" style="left:766.9px;top:774.44px;font-size:12px;line-height:12px;letter-spacing:-0.2px;color:#212529;">CUSTOM</div>
<svg class="r" style="left:823px;top:777.3px;" width="8" height="5" viewBox="0 0 8 5"><path d="M0.2 4.8 L4 0.4 L7.8 4.8 Z" fill="#999"/></svg>
<svg class="r" style="left:843.7px;top:776.5px;" width="11.5" height="9" viewBox="0 0 11.5 9"><rect x="0.6" y="0.6" width="10.3" height="7.8" rx="0.8" fill="none" stroke="#444" stroke-width="1"/><path d="M5.75 2.1 L5 2.9 H6.5 Z M5.75 6.9 L5 6.1 H6.5 Z M2.2 4.5 L3 3.8 V5.2 Z M9.3 4.5 L8.5 3.8 V5.2 Z" fill="#444"/></svg>
<div class="r" style="left:455.5px;top:407px;width:16px;height:51.5px;background:#fff;border:1px solid #dddddd;border-radius:3.5px;box-sizing:border-box"></div>
<div class="r" style="left:456px;top:443px;width:15px;height:1px;background:#dddddd"></div>
<div class="r" style="left:460.5px;top:414px;width:1px;height:22px;background:#999"></div>
<div class="r" style="left:463.5px;top:414px;width:1px;height:22px;background:#999"></div>
<svg class="r" style="left:460.7px;top:447.6px;" width="5" height="5" viewBox="0 0 5 5"><path d="M0.4 0.4 L4.6 4.6 M4.6 0.4 L0.4 4.6" stroke="#999" stroke-width="0.9"/></svg>
<svg class="r" style="left:-50px;top:-30px" width="1380" height="900" viewBox="0 0 2760 1800"><polyline points="1094.0,1324.0 1113.6,1324.0 1116.6,1286.8 1119.6,1253.0 1122.2,1208.2 1124.8,1167.6 1129.4,1105.0 1132.1,1073.2 1134.7,1042.7 1139.3,977.0 1142.5,949.0 1145.8,921.0 1150.0,905.0 1153.0,915.0 1157.0,898.0 1161.0,912.0 1165.0,900.0 1169.0,918.0 1172.0,905.0 1174.0,891.6 1176.7,867.1 1179.3,841.2 1182.0,819.0 1185.3,806.1 1188.6,790.0 1191.8,754.1 1195.0,721.0 1198.3,706.7 1201.7,688.0 1204.8,667.7 1208.0,648.5 1211.3,616.2 1214.7,596.4 1218.0,576.0 1221.3,554.6 1224.7,537.0 1227.8,522.1 1231.0,504.0 1236.0,497.0 1241.0,510.0 1246.0,495.0 1251.0,512.0 1256.0,497.0 1261.0,508.0 1266.0,496.0 1270.0,512.0 1274.0,517.0 1277.2,550.4 1280.5,583.0 1283.8,608.6 1287.1,633.2 1290.4,661.6 1293.0,682.4 1295.6,705.8 1298.3,728.9 1300.9,749.7 1303.5,773.0 1306.8,876.0 1310.0,977.0 1313.3,1059.4 1316.7,1141.0 1319.8,1165.9 1323.0,1187.0 1326.4,1215.4 1329.8,1246.0 1332.7,1265.1 1335.5,1299.3 1338.4,1324.0 1374.5,1324.0 1379.0,1266.0 1382.3,1219.9 1385.7,1174.0 1389.6,1135.3 1393.5,1095.0 1396.2,1057.7 1398.8,1019.7 1401.6,973.6 1404.5,934.8 1407.3,891.6 1411.0,880.0 1414.0,900.0 1418.0,878.0 1422.0,895.0 1426.0,872.0 1430.0,885.0 1435.0,832.5 1438.2,806.0 1441.5,780.0 1444.8,768.3 1448.0,740.5 1451.3,721.6 1454.6,701.0 1457.8,685.5 1461.0,668.0 1464.4,650.9 1467.8,628.8 1470.4,601.9 1473.0,582.8 1477.6,550.0 1480.9,531.1 1484.2,510.3 1487.5,490.8 1490.8,471.5 1494.0,456.0 1498.0,470.0 1502.0,452.0 1506.0,468.0 1510.0,455.0 1514.0,472.0 1518.0,453.0 1522.0,466.0 1527.0,458.0 1530.0,477.7 1533.3,503.1 1536.7,524.6 1540.0,550.0 1543.3,578.1 1546.7,602.3 1550.0,628.8 1553.9,648.8 1557.8,665.0 1560.4,761.9 1563.0,845.6 1566.3,996.4 1569.6,1148.0 1572.8,1179.4 1576.0,1207.0 1579.4,1223.7 1582.8,1253.0 1586.4,1278.0 1590.0,1305.6 1591.8,1324.0 1635.8,1324.0 1638.4,1280.6 1641.1,1236.1 1643.7,1194.0 1646.3,1168.9 1649.0,1144.6 1652.3,1103.6 1655.6,1062.0 1660.0,1006.6 1662.7,978.7 1665.4,944.0 1669.0,928.0 1673.0,940.0 1677.0,925.0 1681.0,938.0 1685.0,921.0 1688.0,935.0 1691.3,914.6 1694.7,890.8 1698.0,872.0 1701.3,848.5 1704.7,820.4 1708.0,786.5 1711.3,779.2 1714.7,773.0 1717.8,741.0 1721.0,707.6 1724.3,685.7 1727.7,666.5 1731.0,648.5 1734.3,629.9 1737.7,615.7 1740.8,587.6 1744.0,563.0 1746.7,538.3 1749.3,516.7 1752.0,490.8 1755.3,471.6 1758.7,456.0 1763.0,440.0 1767.0,455.0 1771.0,432.0 1775.0,452.0 1779.0,436.0 1784.0,450.0 1788.0,430.0 1792.0,445.0 1797.0,440.0 1800.0,490.8 1803.3,520.7 1806.7,550.2 1810.0,582.8 1813.3,604.7 1816.5,608.9 1819.8,622.0 1823.1,643.0 1826.4,668.0 1829.7,755.6 1833.0,845.6 1838.0,1016.5 1841.4,1105.7 1844.8,1207.0 1847.4,1224.6 1850.1,1235.9 1852.7,1253.0 1856.6,1286.1 1860.5,1324.0 1898.7,1324.0 1902.0,1266.0 1905.3,1215.7 1908.5,1164.2 1911.8,1108.0 1915.1,1064.8 1918.4,1023.0 1923.0,970.5 1928.0,918.0 1932.0,908.0 1936.0,925.0 1940.0,906.0 1944.0,922.0 1948.0,910.0 1952.0,925.0 1954.9,899.9 1957.8,872.0 1961.1,862.4 1964.3,848.6 1967.6,839.0 1971.0,793.0 1974.2,782.0 1977.5,753.6 1980.8,747.6 1984.0,730.6 1987.3,716.9 1990.6,694.5 1995.0,635.0 1997.9,613.3 2000.9,589.1 2003.8,569.7 2006.5,551.0 2009.3,535.5 2012.0,517.0 2017.0,484.0 2021.0,500.0 2025.0,482.0 2029.0,498.0 2033.0,485.0 2037.0,502.0 2041.0,484.0 2045.0,496.0 2049.0,486.0 2053.0,500.0 2058.0,530.0 2063.0,582.8 2066.2,604.9 2069.5,628.8 2072.3,657.3 2075.2,665.8 2078.0,688.0 2081.3,707.9 2084.6,730.6 2087.2,778.4 2089.9,831.2 2092.5,878.5 2095.8,996.4 2099.0,1115.0 2102.3,1152.5 2105.6,1187.0 2108.8,1220.8 2112.0,1253.0 2115.3,1281.7 2118.5,1300.2 2121.8,1324.0 2159.3,1324.0 2162.6,1276.8 2165.8,1226.7 2170.4,1174.0 2174.4,1102.0 2177.4,1067.3 2180.3,1029.6 2182.9,981.7 2185.6,937.6 2190.0,885.0 2194.0,875.0 2198.0,892.0 2202.0,874.0 2206.0,890.0 2210.0,878.0 2215.0,893.0 2218.3,871.5 2221.7,845.6 2225.0,816.1 2228.3,789.8 2231.6,766.7 2234.8,747.0 2238.1,732.8 2241.4,707.6 2244.1,696.1 2246.7,681.4 2251.3,635.4 2254.1,625.1 2257.0,609.4 2259.8,596.0 2263.1,573.8 2266.4,556.5 2271.0,523.7 2274.2,503.4 2277.5,477.7 2281.0,495.0 2285.0,475.0 2289.0,492.0 2293.0,476.0 2297.0,494.0 2301.0,478.0 2305.0,496.0 2309.0,480.0 2313.7,500.0 2316.3,507.4 2319.0,510.5 2322.2,548.5 2325.5,582.8 2328.1,597.3 2330.8,621.2 2333.4,642.0 2336.7,675.2 2340.0,707.6 2343.2,723.6 2346.5,740.5 2349.8,821.4 2353.1,898.0 2356.4,977.0 2359.3,1057.9 2362.1,1136.8 2365.0,1213.6 2367.6,1235.6 2370.2,1254.8 2372.8,1279.0 2376.1,1299.9 2379.4,1324.0 2422.0,1324.0 2425.4,1259.5 2428.7,1215.0 2432.0,1167.6 2435.2,1124.7 2438.5,1082.0 2441.8,1029.6 2446.4,977.0 2449.1,921.3 2451.7,865.0 2455.0,845.0 2459.0,860.0 2463.0,840.0 2467.0,858.0 2471.0,845.0 2474.7,860.0 2477.8,833.1 2481.0,806.0 2484.4,787.8 2487.8,766.8 2491.1,737.5 2494.4,707.6 2497.7,690.1 2501.0,674.8 2506.0,628.8 2508.7,617.9 2511.3,608.2 2514.0,596.0 2518.7,550.0 2521.5,529.2 2524.2,510.6 2527.0,490.8 2530.4,462.2 2533.8,431.7 2537.1,412.2 2540.4,392.3 2543.7,381.4 2547.0,366.0 2550.0,352.0 2553.0,372.0 2556.0,348.0 2560.0,370.0 2564.0,350.0 2568.0,374.0 2572.0,356.0 2576.0,368.0 2579.8,379.0 2584.4,418.6 2587.3,435.8 2590.1,444.9 2593.0,464.5 2596.2,489.7 2599.5,510.5 2602.8,517.1 2606.0,536.5 2609.3,550.0 2612.6,582.8 2615.8,663.6 2619.0,747.0 2622.3,835.5 2625.7,924.3 2629.0,1010.0 2632.3,1043.9 2635.6,1075.6 2639.0,1108.0" fill="none" stroke="#f09c3a" stroke-width="2.2" stroke-linejoin="round"/></svg>
<svg class="r" style="left:-50px;top:-30px" width="1380" height="900" viewBox="0 0 2760 1800"><polyline points="1095.0,1517.0 1096.7,1466.5 1100.4,1516.6 1102.2,1478.5 1104.8,1515.8 1106.3,1464.5 1109.1,1516.1 1110.9,1472.5 1114.0,1516.2 1115.4,1463.5 1119.0,1516.5 1121.0,1462.5 1123.8,1515.6 1125.0,1462.5 1128.6,1517.0 1130.4,1467.5 1133.8,1515.7 1135.4,1478.5 1138.6,1515.6 1140.7,1462.5 1143.3,1516.5 1144.8,1467.5 1148.3,1515.8 1149.9,1467.5 1153.2,1516.4 1154.8,1464.5 1158.5,1516.1 1160.6,1465.5 1164.4,1516.2 1165.8,1466.5 1169.5,1515.7 1171.3,1464.5 1174.7,1515.5 1176.1,1462.5 1178.8,1515.8 1181.0,1462.5 1184.0,1517.4 1186.1,1462.5 1189.1,1516.0 1191.1,1462.5 1194.5,1516.0 1196.0,1478.5 1199.0,1515.7 1201.2,1472.5 1204.1,1517.4 1205.3,1462.5 1208.6,1517.4 1210.0,1467.5 1213.0,1517.0 1214.9,1466.5 1217.8,1515.6 1219.9,1467.5 1223.0,1515.8 1224.6,1478.5 1228.0,1517.3 1230.2,1472.5 1233.1,1516.2 1235.0,1465.5 1238.1,1517.0 1239.6,1466.5 1242.2,1516.7 1244.0,1462.5 1247.1,1516.3 1248.4,1466.5 1251.6,1516.1 1253.1,1465.5 1256.6,1517.5 1257.9,1462.5 1261.6,1517.0 1263.3,1478.5 1266.6,1517.1 1268.0,1466.5 1271.6,1517.0 1273.6,1462.5 1277.1,1517.4 1278.9,1463.5 1281.9,1517.1 1283.9,1464.5 1286.9,1516.1 1288.7,1462.5 1291.4,1516.9 1293.0,1464.5 1296.1,1515.8 1297.5,1466.5 1300.9,1517.1 1302.7,1465.5 1305.6,1517.3 1307.3,1464.5 1310.3,1515.8 1312.1,1465.5 1315.1,1515.8 1316.4,1478.5 1319.4,1517.2 1320.9,1465.5 1324.0,1516.2 1325.5,1478.5 1328.6,1515.7 1330.0,1462.5 1333.1,1515.8 1335.0,1472.5 1338.1,1515.6 1340.2,1464.5 1342.8,1516.6 1344.8,1472.5 1348.6,1516.4 1350.6,1462.5 1354.3,1515.6 1355.6,1464.5 1358.2,1515.7 1360.1,1464.5 1363.8,1515.7 1365.6,1462.5 1368.8,1517.3 1370.5,1464.5 1373.9,1516.5 1375.5,1478.5 1378.2,1517.2 1380.4,1472.5 1383.6,1515.9 1385.1,1464.5 1387.9,1515.7 1389.2,1464.5 1392.7,1515.7 1394.7,1462.5 1397.9,1516.4 1399.5,1465.5 1402.4,1516.3 1404.1,1462.5 1407.3,1515.9 1408.5,1462.5 1412.0,1517.4 1413.3,1469.5 1417.1,1515.8 1418.3,1472.5 1421.5,1517.2 1422.8,1467.5 1426.2,1516.3 1427.7,1464.5 1431.5,1516.6 1432.9,1462.5 1436.3,1516.7 1437.6,1463.5 1440.2,1516.6 1442.1,1472.5 1445.2,1515.9 1447.0,1467.5 1449.6,1516.2 1451.6,1466.5 1454.7,1516.1 1456.4,1464.5 1459.2,1517.0 1461.0,1467.5 1463.9,1517.2 1465.1,1466.5 1468.2,1515.7 1470.2,1465.5 1472.9,1516.1 1475.0,1472.5 1478.6,1516.2 1480.5,1478.5 1483.8,1515.9 1485.7,1469.5 1488.5,1516.0 1489.7,1462.5 1493.0,1516.2 1494.5,1462.5 1497.6,1515.8 1498.8,1462.5 1502.2,1515.8 1504.3,1478.5 1507.3,1517.3 1509.5,1478.5 1512.7,1516.1 1514.0,1462.5 1517.7,1517.4 1519.3,1478.5 1522.1,1517.3 1524.3,1464.5 1527.4,1516.1 1529.6,1465.5 1532.6,1516.7 1534.2,1467.5 1537.9,1516.7 1539.4,1467.5 1543.0,1515.6 1544.6,1478.5 1548.1,1516.2 1549.8,1469.5 1552.6,1516.7 1554.7,1463.5 1557.4,1516.0 1559.5,1472.5 1563.3,1516.3 1565.3,1463.5 1568.2,1517.1 1570.0,1466.5 1573.7,1515.8 1575.5,1465.5 1578.9,1515.8 1580.7,1478.5 1584.0,1517.0 1585.4,1462.5 1588.3,1515.9 1589.7,1478.5 1592.8,1516.9 1594.7,1463.5 1597.8,1516.1 1599.7,1464.5 1602.9,1515.8 1604.9,1472.5 1607.5,1515.5 1608.8,1467.5 1612.4,1515.7 1613.6,1464.5 1617.3,1516.2 1619.3,1462.5 1623.0,1515.8 1624.4,1464.5 1628.0,1517.2 1629.8,1462.5 1633.5,1517.0 1635.5,1466.5 1638.4,1517.3 1640.4,1462.5 1643.1,1515.8 1644.6,1466.5 1647.7,1516.0 1649.2,1462.5 1652.2,1516.6 1653.9,1464.5 1657.3,1516.0 1659.0,1463.5 1662.2,1517.3 1663.7,1467.5 1666.5,1515.7 1668.6,1462.5 1671.8,1516.1 1673.7,1466.5 1677.2,1516.9 1679.1,1465.5 1681.8,1515.6 1683.3,1478.5 1686.6,1517.3 1688.3,1466.5 1690.9,1516.9 1692.9,1463.5 1696.2,1516.0 1697.6,1466.5 1701.3,1516.2 1702.6,1472.5 1705.4,1516.8 1707.3,1478.5 1710.4,1516.9 1711.8,1469.5 1714.7,1517.1 1716.0,1463.5 1719.5,1516.4 1721.5,1466.5 1724.2,1517.0 1725.4,1463.5 1728.1,1516.5 1729.5,1472.5 1732.5,1516.8 1734.2,1472.5 1737.7,1517.4 1739.4,1462.5 1742.2,1516.3 1744.1,1478.5 1747.6,1516.0 1749.0,1464.5 1752.3,1516.2 1753.9,1463.5 1757.2,1517.2 1758.8,1464.5 1762.0,1517.2 1763.4,1465.5 1766.5,1516.9 1768.5,1469.5 1772.2,1515.6 1773.8,1472.5 1777.4,1516.9 1779.1,1472.5 1782.6,1516.9 1784.6,1469.5 1787.3,1517.1 1789.1,1462.5 1792.6,1516.2 1794.3,1472.5 1797.7,1517.1 1799.6,1464.5 1802.3,1516.5 1804.1,1469.5 1806.9,1516.9 1808.7,1463.5 1811.5,1515.9 1813.3,1462.5 1815.9,1516.3 1817.6,1469.5 1820.9,1515.6 1822.4,1466.5 1825.8,1517.2 1827.9,1478.5 1831.4,1517.4 1832.7,1466.5 1836.5,1517.1 1837.8,1464.5 1840.9,1516.0 1842.6,1462.5 1846.1,1516.7 1848.2,1463.5 1851.2,1516.6 1852.5,1467.5 1855.4,1516.5 1856.6,1469.5 1860.1,1516.7 1861.5,1462.5 1864.9,1516.8 1866.5,1472.5 1869.5,1516.7 1871.7,1464.5 1874.6,1516.8 1876.7,1472.5 1879.5,1517.1 1880.9,1467.5 1884.1,1516.2 1885.4,1478.5 1888.2,1516.5 1889.5,1462.5 1892.6,1516.9 1893.8,1462.5 1896.7,1517.4 1898.4,1464.5 1901.3,1516.7 1902.7,1466.5 1906.0,1516.8 1907.3,1462.5 1910.9,1516.9 1913.1,1469.5 1916.6,1515.6 1918.3,1472.5 1921.2,1515.9 1923.1,1466.5 1926.1,1517.4 1927.7,1462.5 1931.0,1517.5 1932.2,1462.5 1934.9,1516.5 1936.5,1464.5 1939.9,1515.7 1941.3,1469.5 1944.3,1516.5 1945.9,1462.5 1948.9,1516.0 1950.8,1467.5 1953.5,1516.9 1955.5,1462.5 1958.7,1516.4 1960.5,1467.5 1963.3,1516.0 1965.2,1472.5 1968.2,1517.1 1970.2,1469.5 1973.1,1515.9 1974.8,1465.5 1978.4,1516.5 1980.3,1467.5 1984.1,1517.4 1985.5,1462.5 1989.0,1517.3 1990.9,1462.5 1993.9,1516.3 1995.9,1462.5 1999.6,1515.8 2001.2,1466.5 2005.0,1517.5 2006.4,1462.5 2009.4,1516.9 2011.1,1464.5 2014.0,1517.4 2015.3,1463.5 2018.6,1517.5 2020.0,1464.5 2022.9,1516.4 2024.5,1478.5 2027.5,1515.7 2029.5,1469.5 2032.3,1517.3 2034.3,1462.5 2037.6,1515.8 2039.0,1465.5 2041.7,1516.6 2043.1,1478.5 2045.8,1516.5 2047.7,1466.5 2050.8,1516.2 2052.7,1465.5 2056.3,1516.3 2058.4,1464.5 2061.1,1517.5 2062.6,1462.5 2065.6,1517.1 2067.6,1472.5 2071.0,1516.8 2073.0,1462.5 2076.3,1517.1 2077.8,1462.5 2080.8,1516.6 2082.1,1464.5 2085.1,1516.0 2086.5,1464.5 2090.2,1515.5 2092.0,1472.5 2095.6,1516.8 2097.0,1478.5 2100.7,1516.5 2102.7,1467.5 2105.9,1516.3 2107.1,1462.5 2109.9,1517.3 2111.9,1465.5 2115.1,1517.4 2116.7,1464.5 2120.2,1516.9 2121.9,1466.5 2125.0,1517.1 2127.0,1463.5 2129.7,1516.9 2131.3,1462.5 2134.2,1516.5 2136.2,1465.5 2140.0,1515.5 2142.0,1466.5 2145.8,1516.6 2147.9,1469.5 2151.1,1516.4 2152.7,1465.5 2155.6,1516.6 2157.7,1465.5 2161.2,1515.6 2162.9,1462.5 2165.7,1516.4 2167.4,1463.5 2171.2,1517.5 2173.4,1469.5 2176.4,1515.6 2178.0,1472.5 2180.6,1517.1 2181.8,1467.5 2185.5,1515.8 2187.3,1462.5 2190.4,1517.0 2192.3,1469.5 2195.4,1517.0 2196.7,1467.5 2199.3,1515.5 2200.7,1478.5 2203.6,1517.2 2205.5,1467.5 2208.7,1515.8 2210.5,1465.5 2213.1,1517.4 2214.8,1462.5 2218.5,1515.7 2220.1,1478.5 2223.4,1516.8 2225.2,1465.5 2228.0,1516.1 2230.2,1472.5 2232.9,1516.0 2234.6,1465.5 2238.1,1516.6 2240.3,1463.5 2243.6,1517.2 2244.8,1469.5 2248.4,1515.8 2250.6,1478.5 2253.5,1516.9 2255.3,1462.5 2258.5,1516.9 2260.4,1465.5 2263.1,1516.2 2264.7,1472.5 2267.9,1516.0 2269.9,1469.5 2272.7,1515.7 2274.1,1467.5 2277.8,1516.7 2279.1,1464.5 2282.8,1515.6 2284.3,1467.5 2287.6,1517.4 2289.2,1467.5 2293.0,1517.3 2294.4,1464.5 2297.9,1516.1 2299.2,1462.5 2302.6,1515.9 2303.8,1465.5 2307.6,1516.1 2309.2,1469.5 2312.4,1516.9 2314.1,1463.5 2317.0,1515.6 2318.3,1463.5 2321.8,1516.6 2323.4,1462.5 2326.1,1517.4 2328.1,1463.5 2331.1,1516.2 2332.4,1463.5 2335.1,1515.6 2336.8,1467.5 2340.3,1516.6 2341.7,1462.5 2344.6,1517.2 2346.0,1463.5 2349.1,1515.6 2350.9,1464.5 2353.5,1516.8 2354.8,1469.5 2357.7,1516.8 2359.9,1469.5 2362.6,1515.8 2364.2,1466.5 2367.5,1515.8 2369.1,1467.5 2372.3,1516.4 2373.9,1472.5 2377.1,1516.7 2379.0,1465.5 2382.8,1515.8 2384.1,1463.5 2387.1,1515.8 2388.4,1478.5 2392.2,1516.7 2394.3,1462.5 2397.6,1517.2 2398.9,1467.5 2402.7,1516.1 2404.4,1465.5 2407.1,1516.4 2408.8,1463.5 2412.1,1517.1 2413.7,1478.5 2416.8,1516.9 2418.3,1478.5 2421.9,1516.1 2423.4,1466.5 2426.4,1515.5 2427.8,1462.5 2431.1,1517.1 2433.3,1464.5 2436.3,1515.6 2437.9,1469.5 2440.9,1515.9 2442.3,1478.5 2445.5,1516.6 2447.4,1462.5 2450.5,1516.4 2452.3,1465.5 2454.9,1515.8 2456.5,1462.5 2459.6,1517.1 2461.3,1462.5 2464.4,1515.8 2466.3,1466.5 2469.0,1516.8 2470.5,1469.5 2473.6,1516.2 2475.7,1478.5 2478.8,1516.9 2480.0,1462.5 2483.4,1517.2 2484.7,1466.5 2487.8,1517.1 2489.0,1466.5 2492.3,1516.0 2494.3,1464.5 2497.4,1516.1 2498.7,1467.5 2501.6,1517.2 2503.1,1472.5 2505.9,1515.9 2507.7,1462.5 2510.9,1515.9 2512.4,1469.5 2516.0,1517.1 2517.5,1467.5 2520.4,1516.2 2522.1,1465.5 2525.3,1517.3 2527.4,1462.5 2530.1,1515.7 2532.1,1466.5 2534.7,1517.5 2536.4,1467.5 2539.8,1517.3 2541.6,1467.5 2545.3,1517.0 2546.8,1467.5 2550.6,1517.4 2552.3,1472.5 2555.5,1516.4 2556.8,1464.5 2560.4,1515.9 2562.5,1467.5 2565.5,1515.5 2567.3,1472.5 2570.2,1516.4 2571.7,1478.5 2574.5,1516.4 2576.3,1466.5 2579.3,1515.8 2581.1,1472.5 2583.9,1517.4 2585.5,1465.5 2588.9,1516.5 2591.0,1463.5 2594.5,1515.6 2595.9,1472.5 2598.9,1517.1 2600.3,1462.5 2603.3,1517.0 2605.4,1462.5 2608.3,1516.8 2609.7,1465.5 2612.6,1517.0 2614.5,1466.5 2618.0,1517.1 2619.5,1463.5 2622.8,1517.0 2624.7,1464.5 2628.2,1516.8 2629.7,1472.5 2632.7,1516.4 2634.5,1465.5" fill="none" stroke="#f3b46e" stroke-width="1.7" stroke-linejoin="round"/><rect x="2637.5" y="1459.5" width="5" height="85" rx="2.5" fill="#fff" stroke="#1a1a1a" stroke-width="2"/><rect x="2634" y="1474" width="10" height="36" rx="2" fill="#1f1f1f"/><rect x="2635.5" y="1525" width="8" height="12" fill="#9a9a9a"/></svg>
</div></div>
<svg style="position:absolute;left:0;top:0" width="2760" height="1800" viewBox="0 0 2760 1800"><path d="M284.1 442 L639.2 442" stroke="#6f00ff" stroke-width="4" stroke-dasharray="12.11 8.07 24.21 8.07 24.21 8.07 24.21 8.07 24.21 8.07 24.21 8.07 24.21 8.07 24.21 8.07 24.21 8.07 24.21 8.07 24.21 8.07 12.11 0" fill="none"/><path d="M284.1 502 L639.2 502" stroke="#6f00ff" stroke-width="4" stroke-dasharray="12.11 8.07 24.21 8.07 24.21 8.07 24.21 8.07 24.21 8.07 24.21 8.07 24.21 8.07 24.21 8.07 24.21 8.07 24.21 8.07 24.21 8.07 12.11 0" fill="none"/><path d="M286.1 440 L286.1 504" stroke="#6f00ff" stroke-width="4" stroke-dasharray="12.00 8.00 24.00 8.00 12.00 0" fill="none"/><path d="M637.2 440 L637.2 504" stroke="#6f00ff" stroke-width="4" stroke-dasharray="12.00 8.00 24.00 8.00 12.00 0" fill="none"/><path d="M236 593.3 L567 593.3" stroke="#6f00ff" stroke-width="4" stroke-dasharray="12.41 8.28 24.83 8.28 24.83 8.28 24.83 8.28 24.83 8.28 24.83 8.28 24.83 8.28 24.83 8.28 24.83 8.28 24.83 8.28 12.41 0" fill="none"/><path d="M236 667.3 L567 667.3" stroke="#6f00ff" stroke-width="4" stroke-dasharray="12.41 8.28 24.83 8.28 24.83 8.28 24.83 8.28 24.83 8.28 24.83 8.28 24.83 8.28 24.83 8.28 24.83 8.28 24.83 8.28 12.41 0" fill="none"/><path d="M238 591.3 L238 669.3" stroke="#6f00ff" stroke-width="4" stroke-dasharray="14.62 9.75 29.25 9.75 14.62 0" fill="none"/><path d="M565 591.3 L565 669.3" stroke="#6f00ff" stroke-width="4" stroke-dasharray="14.62 9.75 29.25 9.75 14.62 0" fill="none"/><path d="M638 471.8 H974" stroke="#6f00ff" stroke-width="3.4"/><path d="M653.5 458.3 L638.5 471.8 L653.5 485.3" fill="none" stroke="#6f00ff" stroke-width="3.4"/><path d="M566 629.8 H926" stroke="#6f00ff" stroke-width="3.4"/><path d="M581.5 616.3 L566.5 629.8 L581.5 643.3" fill="none" stroke="#6f00ff" stroke-width="3.4"/><rect x="974" y="442.4" width="403.5999999999999" height="59.0" rx="9" fill="#fff" stroke="#6f00ff" stroke-width="4"/><rect x="926.6" y="601" width="450.9999999999999" height="57.5" rx="9" fill="#fff" stroke="#6f00ff" stroke-width="4"/></svg>
<div class="t" style="left:1091.6px;top:456.3px;font-size:32px;line-height:32px;letter-spacing:-0.88px;color:#6f00ff;font-weight:700">Click to edit</div><div class="t" style="left:1063.4px;top:614.5px;font-size:32px;line-height:32px;letter-spacing:-1.40px;color:#6f00ff;font-weight:700">Click to save</div>
</body></html>
